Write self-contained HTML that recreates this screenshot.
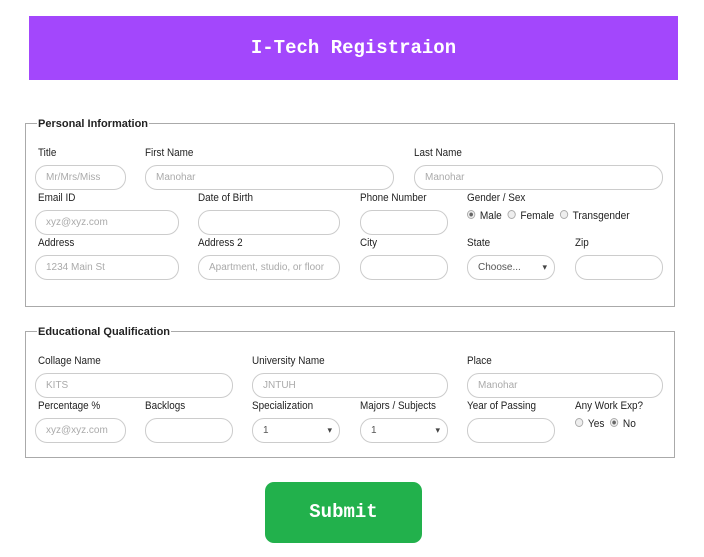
<!DOCTYPE html>
<html><head><style>
body{margin:0;width:704px;height:557px;background:#fff;position:relative;font-family:"Liberation Sans",Arial,sans-serif;overflow:hidden}
.hdr{position:absolute;left:29px;top:16px;width:649px;height:64px;background:#a347fc;color:#fff;font:bold 19px "Liberation Mono",monospace;text-align:center;line-height:64px}
.fs{position:absolute;left:25px;width:650px;border:1px solid #aaa;box-sizing:border-box}
.lg{position:absolute;font-size:11px;font-weight:bold;color:#222;background:#fff;padding:0 1px;line-height:14px}
.l{position:absolute;font-size:11px;color:#222;line-height:12px;transform:scaleX(.9);transform-origin:left}
.i{position:absolute;height:25px;border:1px solid #ccc;border-radius:12px;box-sizing:border-box;font-size:10px;color:#aaa;line-height:23px;padding-left:10px}
.sel::after{content:"▾";position:absolute;right:7px;top:0;color:#444;font-size:9px}
.r{position:absolute;font-size:11px;color:#222;line-height:12px;transform:scaleX(.92);transform-origin:left}
.r span{display:inline-block;width:7px;height:7px;border:1px solid #aaa;border-radius:50%;margin:0 5px 0 0;vertical-align:0;background:#eee}
.r span.on{background:radial-gradient(#666 35%,#eee 45%)}
.btn{position:absolute;left:265px;top:482px;width:157px;height:61px;background:#22b14c;border-radius:9px;color:#fff;font:bold 19px "Liberation Mono",monospace;text-align:center;line-height:61px}
</style></head><body>
<div class="hdr">I-Tech Registraion</div>

<div class="fs" style="top:123px;height:184px"></div>
<div class="lg" style="left:37px;top:117px">Personal Information</div>
<div class="l" style="left:38px;top:147px">Title</div>
<div class="l" style="left:145px;top:147px">First Name</div>
<div class="l" style="left:414px;top:147px">Last Name</div>
<div class="i" style="left:35px;top:165px;width:91px">Mr/Mrs/Miss</div>
<div class="i" style="left:145px;top:165px;width:249px">Manohar</div>
<div class="i" style="left:414px;top:165px;width:249px">Manohar</div>
<div class="l" style="left:38px;top:192px">Email ID</div>
<div class="l" style="left:198px;top:192px">Date of Birth</div>
<div class="l" style="left:360px;top:192px">Phone Number</div>
<div class="l" style="left:467px;top:192px">Gender / Sex</div>
<div class="i" style="left:35px;top:210px;width:144px">xyz@xyz.com</div>
<div class="i" style="left:198px;top:210px;width:142px"></div>
<div class="i" style="left:360px;top:210px;width:88px"></div>
<div class="r" style="left:467px;top:210px"><span class="on"></span>Male &nbsp;<span></span>Female &nbsp;<span></span>Transgender</div>
<div class="l" style="left:38px;top:237px">Address</div>
<div class="l" style="left:198px;top:237px">Address 2</div>
<div class="l" style="left:360px;top:237px">City</div>
<div class="l" style="left:467px;top:237px">State</div>
<div class="l" style="left:575px;top:237px">Zip</div>
<div class="i" style="left:35px;top:255px;width:144px">1234 Main St</div>
<div class="i" style="left:198px;top:255px;width:142px">Apartment, studio, or floor</div>
<div class="i" style="left:360px;top:255px;width:88px"></div>
<div class="i sel" style="left:467px;top:255px;width:88px;color:#555">Choose...</div>
<div class="i" style="left:575px;top:255px;width:88px"></div>

<div class="fs" style="top:331px;height:127px"></div>
<div class="lg" style="left:37px;top:325px">Educational Qualification</div>
<div class="l" style="left:38px;top:355px">Collage Name</div>
<div class="l" style="left:252px;top:355px">University Name</div>
<div class="l" style="left:467px;top:355px">Place</div>
<div class="i" style="left:35px;top:373px;width:198px">KITS</div>
<div class="i" style="left:252px;top:373px;width:196px">JNTUH</div>
<div class="i" style="left:467px;top:373px;width:196px">Manohar</div>
<div class="l" style="left:38px;top:400px">Percentage %</div>
<div class="l" style="left:145px;top:400px">Backlogs</div>
<div class="l" style="left:252px;top:400px">Specialization</div>
<div class="l" style="left:360px;top:400px">Majors / Subjects</div>
<div class="l" style="left:467px;top:400px">Year of Passing</div>
<div class="l" style="left:575px;top:400px">Any Work Exp?</div>
<div class="i" style="left:35px;top:418px;width:91px">xyz@xyz.com</div>
<div class="i" style="left:145px;top:418px;width:88px"></div>
<div class="i sel" style="left:252px;top:418px;width:88px;color:#555">1</div>
<div class="i sel" style="left:360px;top:418px;width:88px;color:#555">1</div>
<div class="i" style="left:467px;top:418px;width:88px"></div>
<div class="r" style="left:575px;top:418px"><span></span>Yes &nbsp;<span class="on"></span>No</div>

<div class="btn">Submit</div>
</body></html>
